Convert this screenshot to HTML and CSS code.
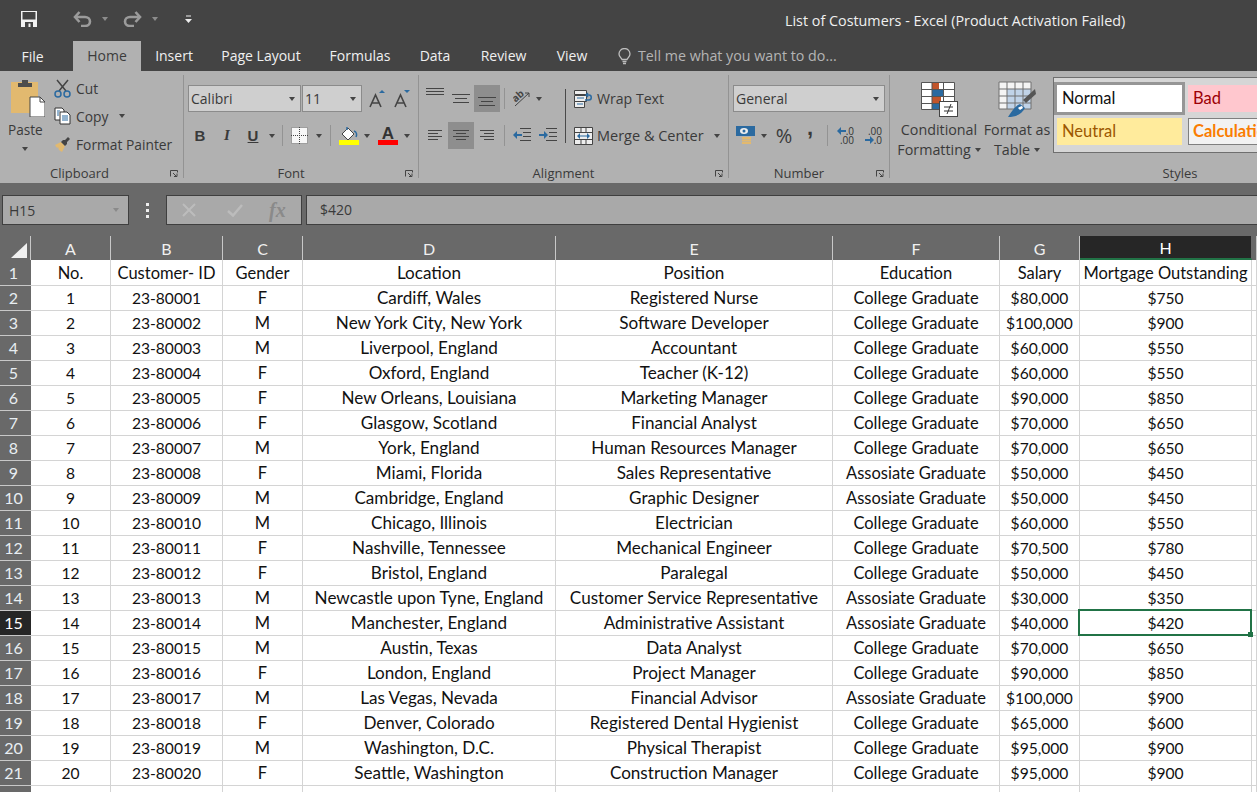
FILE: index.html
```html
<!DOCTYPE html>
<html lang="en">
<head>
<meta charset="utf-8">
<title>List of Costumers - Excel</title>
<link rel="stylesheet" href="styles.css">
</head>
<body>
<header class="titlebar">
  <div class="qat">
    <svg class="qa-save" width="16" height="16" viewBox="0 0 16 16"><path d="M0 0h16v16H0z" fill="#f2f2f2"/><path d="M1.500 1h13v7.500h-13z" fill="#444"/><path d="M4 11h8v5H4z" fill="#444"/><path d="M7.500 12.500h2V16h-2z" fill="#f2f2f2"/></svg>
    <svg class="qa-undo" width="19" height="16" viewBox="0 0 19 16"><path d="M2 6h10a5 4.500 0 0 1 0 9H8" fill="none" stroke="#9b9b9b" stroke-width="2.600"/><path d="M6.500 1 2 6l4.500 5" fill="none" stroke="#9b9b9b" stroke-width="2.600"/></svg>
    <i class="caret dim qa-c1"></i>
    <svg class="qa-redo" width="19" height="16" viewBox="0 0 19 16"><path d="M17 6H7a5 4.500 0 0 0 0 9h4" fill="none" stroke="#9b9b9b" stroke-width="2.600"/><path d="M12.500 1 17 6l-4.500 5" fill="none" stroke="#9b9b9b" stroke-width="2.600"/></svg>
    <i class="caret dim qa-c2"></i>
    <svg class="qa-more" width="7" height="8" viewBox="0 0 7 8"><path d="M1 1h5" stroke="#eee"/><path d="M0 4h7L3.500 8z" fill="#eee"/></svg>
  </div>
  <div class="doc-title">List of Costumers - Excel (Product Activation Failed)</div>
</header>
<nav class="tabs">
  <span class="tab tab-file">File</span>
  <span class="tab tab-home">Home</span>
  <span class="tab tab-insert">Insert</span>
  <span class="tab tab-layout">Page Layout</span>
  <span class="tab tab-formulas">Formulas</span>
  <span class="tab tab-data">Data</span>
  <span class="tab tab-review">Review</span>
  <span class="tab tab-view">View</span>
  <svg class="bulb" width="13" height="17" viewBox="0 0 13 17"><path d="M4 11.500C3 9.500 1 8.500 1 6a5.500 5.500 0 0 1 11 0c0 2.500-2 3.500-3 5.500z" fill="none" stroke="#bdbdbd" stroke-width="1.300"/><path d="M4.500 13.500h4M5 15.500h3" stroke="#bdbdbd" stroke-width="1.300"/></svg>
  <span class="tell">Tell me what you want to do...</span>
</nav>

<section class="ribbon">
  <div class="group g-clip">
    <div class="clip-body">
      <div class="paste">
        <svg width="37" height="38" viewBox="0 0 37 38"><rect x="3" y="3" width="27" height="31" fill="#e2b96f"/><path d="M10 4h4V1h6v3h4v4H10z" fill="#4d4d4d"/><path d="M22 18h10l5 5v15H22z" fill="#fff" stroke="#444"/><path d="M32 18v5h5" fill="none" stroke="#444"/></svg>
        <span class="paste-label">Paste</span>
        <i class="caret"></i>
      </div>
      <ul class="clip-list">
        <li><svg width="17" height="19" viewBox="0 0 17 19"><path d="M3 1l9 11M14 1L5 12" stroke="#444" stroke-width="1.500"/><circle cx="4" cy="15" r="3" fill="none" stroke="#2b6aa0" stroke-width="1.500"/><circle cx="13" cy="15" r="3" fill="none" stroke="#2b6aa0" stroke-width="1.500"/></svg><span>Cut</span></li>
        <li><svg width="17" height="18" viewBox="0 0 17 18"><path d="M1 1h7l2 2v10H1z" fill="#fff" stroke="#333"/><path d="M6 5h7l3 3v9H6z" fill="#fff" stroke="#333"/><path d="M8 9h6M8 11h6M8 13h6M3 4h3M3 6h2M3 8h2" stroke="#2b6aa0"/></svg><span>Copy</span><i class="caret copy-caret"></i></li>
        <li><svg width="17" height="16" viewBox="0 0 17 16"><path d="M1 9l6-3 4 4-3 6-3-2-1-3-1 1z" fill="#e2b96f"/><path d="M7 6l2-2 2 0 3-3 2 2-3 3 0 2-2 2z" fill="#444"/></svg><span>Format Painter</span></li>
      </ul>
    </div>
    <div class="glabel lb-clip">Clipboard<svg class="launch" width="8" height="7" viewBox="0 0 8 7"><path d="M.5 6.500v-6h7v2M3 3l3 3M4 6.500h3v-3" fill="none" stroke="#444"/></svg></div>
  </div>

  <div class="group g-font">
    <div class="row">
      <div class="combo c-font"><span>Calibri</span><i class="caret"></i></div>
      <div class="combo c-size"><span>11</span><i class="caret"></i></div>
      <svg class="grow" width="16" height="18" viewBox="0 0 16 18"><path d="M1 17 6.500 5 12 17M3.500 13h6" fill="none" stroke="#444" stroke-width="1.600"/><path d="M10 3h6l-3-3z" fill="#2b6aa0"/></svg>
      <svg class="shrink" width="16" height="18" viewBox="0 0 16 18"><path d="M1 17 6.500 5 12 17M3.500 13h6" fill="none" stroke="#444" stroke-width="1.600"/><path d="M10 0h6l-3 3z" fill="#2b6aa0"/></svg>
    </div>
    <div class="row row2">
      <b class="fmt f-b">B</b>
      <em class="fmt f-i">I</em>
      <u class="fmt f-u">U</u>
      <i class="caret f-c1"></i>
      <i class="vline v-f1"></i>
      <svg class="f-border" width="17" height="17" viewBox="0 0 17 17"><rect width="17" height="17" fill="#f7f7f7"/><path d="M.5.500h16v16H.5zM8.500 0v17M0 8.500h17" fill="none" stroke="#444" stroke-dasharray="1 1"/></svg>
      <i class="caret f-c2"></i>
      <i class="vline v-f2"></i>
      <svg class="f-fill" width="20" height="19" viewBox="0 0 20 19"><path d="M3 8l6-6 6 6-6 6z" fill="#fff" stroke="#444"/><path d="M8 1v3M15 5c3 1 3 4 2 6" fill="none" stroke="#2b6aa0" stroke-width="1.500"/><rect y="14" width="20" height="5" fill="#ff0"/></svg>
      <i class="caret f-c3"></i>
      <span class="f-color">A</span>
      <i class="caret f-c4"></i>
    </div>
    <div class="glabel lb-font">Font<svg class="launch" width="8" height="7" viewBox="0 0 8 7"><path d="M.5 6.500v-6h7v2M3 3l3 3M4 6.500h3v-3" fill="none" stroke="#444"/></svg></div>
  </div>

  <div class="group g-align">
    <div class="align-body">
      <div class="align-grid">
        <div class="row">
          <svg class="al a1" width="18" height="8" viewBox="0 0 18 8"><path d="M0 .5h18M0 3.500h18M0 6.500h18" stroke="#444"/></svg>
          <svg class="al a2" width="18" height="11" viewBox="0 0 18 11"><path d="M0 1.500h18M3 5.500h12M1 9.500h16" stroke="#444"/></svg>
          <span class="sel-btn"><svg width="18" height="11" viewBox="0 0 18 11"><path d="M0 1.500h18M3 5.500h12M1 9.500h16" stroke="#444"/></svg></span>
          <i class="vline v-a1"></i>
          <svg class="orient" width="18" height="17" viewBox="0 0 18 17"><path d="M2 16 16 3M12 3h4v4" fill="none" stroke="#444"/><text x="0" y="10" class="orient-t" transform="rotate(-42 5 8)">ab</text></svg>
          <i class="caret a-c"></i>
        </div>
        <div class="row row2">
          <svg class="al a3" width="14" height="11" viewBox="0 0 14 11"><path d="M0 .5h14M0 3.500h10M0 6.500h14M0 9.500h10" stroke="#444"/></svg>
          <span class="sel-btn sel-mid"><svg width="16" height="11" viewBox="0 0 16 11"><path d="M0 .5h16M3 3.500h10M0 6.500h16M3 9.500h10" stroke="#444"/></svg></span>
          <svg class="al a4" width="14" height="11" viewBox="0 0 14 11"><path d="M0 .5h14M4 3.500h10M0 6.500h14M4 9.500h10" stroke="#444"/></svg>
          <i class="vline v-a2"></i>
          <svg class="ind1" width="18" height="15" viewBox="0 0 18 15"><path d="M7 .5h11M10 4.500h8M10 8.500h8M7 12.500h11" stroke="#444"/><path d="M0 7l4-4v3h5v2H4v3z" fill="#2b6aa0"/></svg>
          <svg class="ind2" width="18" height="15" viewBox="0 0 18 15"><path d="M7 .5h11M10 4.500h8M10 8.500h8M7 12.500h11" stroke="#444"/><path d="M9 7 5 3v3H0v2h5v3z" fill="#2b6aa0"/></svg>
        </div>
      </div>
      <i class="tall-line"></i>
      <div class="wrap-col">
        <div class="wrap-item"><svg width="19" height="18" viewBox="0 0 19 18"><path d="M.5.5h12v4H.5zM.5 5.500h12v6H.5zM.5 11.500h10v6H.5z" fill="#eee" stroke="#444"/><path d="M3 8h7M3 14h6" stroke="#2b6aa0"/><path d="M11 10h4c3 0 3-5 0-5h-3M14 3l-2 2 2 2" fill="none" stroke="#2b6aa0" stroke-width="1.500"/></svg><span>Wrap Text</span></div>
        <div class="wrap-item merge"><svg width="19" height="18" viewBox="0 0 19 18"><path d="M.5.5h18v17H.5zM0 5.500h19M0 12.500h19M7 .5v5M12 .5v5M7 12.500v5M12 12.500v5" fill="#eee" stroke="#444"/><path d="M4 9h11" stroke="#2b6aa0"/><path d="M3 9l3-3v6zM16 9l-3-3v6z" fill="#2b6aa0"/></svg><span>Merge &amp; Center</span><i class="caret merge-c"></i></div>
      </div>
    </div>
    <div class="glabel lb-align">Alignment<svg class="launch" width="8" height="7" viewBox="0 0 8 7"><path d="M.5 6.500v-6h7v2M3 3l3 3M4 6.500h3v-3" fill="none" stroke="#444"/></svg></div>
  </div>

  <div class="group g-num">
    <div class="row"><div class="combo c-gen"><span>General</span><i class="caret"></i></div></div>
    <div class="row row2">
      <svg class="n-acc" width="19" height="19" viewBox="0 0 19 19"><rect x="0" y="0" width="19" height="10" fill="#2b6aa0"/><ellipse cx="8" cy="5" rx="4" ry="3" fill="#eee"/><circle cx="8" cy="5" r="1.500" fill="#2b6aa0"/><path d="M6 12h9M6 14.500h9M6 17h9" stroke="#e2b96f" stroke-width="2"/></svg>
      <i class="caret n-c"></i>
      <span class="n-pct">%</span>
      <span class="n-comma">,</span>
      <i class="vline v-n"></i>
      <span class="n-dec d1"><span class="dec-line"><svg width="9" height="8" viewBox="0 0 9 8"><path d="M0 4l4-4v3h5v2H4v3z" fill="#2b6aa0"/></svg>.0</span><span class="dec-line">.00</span></span>
      <span class="n-dec d2"><span class="dec-line">.00</span><span class="dec-line"><svg width="9" height="8" viewBox="0 0 9 8"><path d="M9 4 5 0v3H0v2h5v3z" fill="#2b6aa0"/></svg>.0</span></span>
    </div>
    <div class="glabel lb-num">Number<svg class="launch" width="8" height="7" viewBox="0 0 8 7"><path d="M.5 6.500v-6h7v2M3 3l3 3M4 6.500h3v-3" fill="none" stroke="#444"/></svg></div>
  </div>

  <div class="group g-styles">
    <div class="styles-body">
      <div class="big big-cond">
        <svg width="37" height="36" viewBox="0 0 37 36"><path d="M.5.500h33v27H.5z" fill="#fff"/><path d="M11 1h7v7h-7zM11 15h9v7h-9z" fill="#c2552b"/><path d="M11 8h11v7H11zM11 22h7v6h-7z" fill="#2b6aa0"/><path d="M.5.500h33v27H.5zM1 7.500h33M1 14.500h33M1 21.500h33M11 1v27M22.500 1v27" fill="none" stroke="#555" stroke-width="1"/><rect x="18.500" y="19.500" width="18" height="15" fill="#fff" stroke="#444"/><path d="M23 25h9M23 29h9M30 22l-4 10" stroke="#333"/></svg>
        <span class="big-label">Conditional</span>
        <span class="big-label">Formatting<i class="caret big-c"></i></span>
      </div>
      <div class="big big-table">
        <svg width="38" height="37" viewBox="0 0 38 37"><path d="M1 1h32v27H1z" fill="#f4f4f4"/><path d="M9 8h24v20H9z" fill="#c0d3e8"/><path d="M1 1h32v27H1zM1 8h32M1 15h32M1 22h32M9 1v27M17 1v27M25 1v27" fill="none" stroke="#707070"/><path d="M10 36c8 0 14-3 17-9l-5-4c-5 2-8 7-12 13z" fill="#2b6aa0"/><path d="M20 27c1-1 3-2 4-2l1 2-3 2z" fill="#fff"/><path d="M25 19l3 3 10-9-1-5z" fill="#555"/></svg>
        <span class="big-label">Format as</span>
        <span class="big-label">Table<i class="caret big-c"></i></span>
      </div>
      <div class="gallery">
        <div class="cell-style st-normal">Normal</div>
        <div class="cell-style st-bad">Bad</div>
        <div class="cell-style st-neutral">Neutral</div>
        <div class="cell-style st-calc">Calculation</div>
      </div>
    </div>
    <div class="glabel lb-styles">Styles</div>
  </div>
</section>

<section class="fbar">
  <div class="namebox"><span>H15</span><i class="caret dim2"></i></div>
  <div class="dots"><i></i><i></i><i></i></div>
  <div class="fx-btns">
    <svg class="fx-x" width="14" height="14" viewBox="0 0 14 14"><path d="M1 1l12 12M13 1 1 13" stroke="#bcbcbc" stroke-width="2"/></svg>
    <svg class="fx-v" width="16" height="13" viewBox="0 0 16 13"><path d="M1 7l5 4.500L15 1" fill="none" stroke="#bcbcbc" stroke-width="2.500"/></svg>
    <span class="fx-f">fx</span>
  </div>
  <div class="finput">$420</div>
</section>

<main class="sheet">
<table class="grid">
<colgroup><col class="c0"><col class="ca"><col class="cb"><col class="cc"><col class="cd"><col class="ce"><col class="cf"><col class="cg"><col class="ch"><col class="ci"></colgroup>
<thead><tr><th class="corner"><i></i></th><th>A</th><th>B</th><th>C</th><th>D</th><th>E</th><th>F</th><th>G</th><th class="active">H</th><th></th></tr></thead>
<tbody>
<tr><th>1</th><td>No.</td><td>Customer- ID</td><td>Gender</td><td>Location</td><td>Position</td><td>Education</td><td>Salary</td><td>Mortgage Outstanding</td><td></td></tr>
<tr><th>2</th><td>1</td><td>23-80001</td><td>F</td><td>Cardiff, Wales</td><td>Registered Nurse</td><td>College Graduate</td><td>$80,000</td><td>$750</td><td></td></tr>
<tr><th>3</th><td>2</td><td>23-80002</td><td>M</td><td>New York City, New York</td><td>Software Developer</td><td>College Graduate</td><td>$100,000</td><td>$900</td><td></td></tr>
<tr><th>4</th><td>3</td><td>23-80003</td><td>M</td><td>Liverpool, England</td><td>Accountant</td><td>College Graduate</td><td>$60,000</td><td>$550</td><td></td></tr>
<tr><th>5</th><td>4</td><td>23-80004</td><td>F</td><td>Oxford, England</td><td>Teacher (K-12)</td><td>College Graduate</td><td>$60,000</td><td>$550</td><td></td></tr>
<tr><th>6</th><td>5</td><td>23-80005</td><td>F</td><td>New Orleans, Louisiana</td><td>Marketing Manager</td><td>College Graduate</td><td>$90,000</td><td>$850</td><td></td></tr>
<tr><th>7</th><td>6</td><td>23-80006</td><td>F</td><td>Glasgow, Scotland</td><td>Financial Analyst</td><td>College Graduate</td><td>$70,000</td><td>$650</td><td></td></tr>
<tr><th>8</th><td>7</td><td>23-80007</td><td>M</td><td>York, England</td><td>Human Resources Manager</td><td>College Graduate</td><td>$70,000</td><td>$650</td><td></td></tr>
<tr><th>9</th><td>8</td><td>23-80008</td><td>F</td><td>Miami, Florida</td><td>Sales Representative</td><td>Assosiate Graduate</td><td>$50,000</td><td>$450</td><td></td></tr>
<tr><th>10</th><td>9</td><td>23-80009</td><td>M</td><td>Cambridge, England</td><td>Graphic Designer</td><td>Assosiate Graduate</td><td>$50,000</td><td>$450</td><td></td></tr>
<tr><th>11</th><td>10</td><td>23-80010</td><td>M</td><td>Chicago, Illinois</td><td>Electrician</td><td>College Graduate</td><td>$60,000</td><td>$550</td><td></td></tr>
<tr><th>12</th><td>11</td><td>23-80011</td><td>F</td><td>Nashville, Tennessee</td><td>Mechanical Engineer</td><td>College Graduate</td><td>$70,500</td><td>$780</td><td></td></tr>
<tr><th>13</th><td>12</td><td>23-80012</td><td>F</td><td>Bristol, England</td><td>Paralegal</td><td>College Graduate</td><td>$50,000</td><td>$450</td><td></td></tr>
<tr><th>14</th><td>13</td><td>23-80013</td><td>M</td><td>Newcastle upon Tyne, England</td><td>Customer Service Representative</td><td>Assosiate Graduate</td><td>$30,000</td><td>$350</td><td></td></tr>
<tr><th class="active">15</th><td>14</td><td>23-80014</td><td>M</td><td>Manchester, England</td><td>Administrative Assistant</td><td>Assosiate Graduate</td><td>$40,000</td><td class="selected">$420<span class="sel-box"><i></i></span></td><td></td></tr>
<tr><th>16</th><td>15</td><td>23-80015</td><td>M</td><td>Austin, Texas</td><td>Data Analyst</td><td>College Graduate</td><td>$70,000</td><td>$650</td><td></td></tr>
<tr><th>17</th><td>16</td><td>23-80016</td><td>F</td><td>London, England</td><td>Project Manager</td><td>College Graduate</td><td>$90,000</td><td>$850</td><td></td></tr>
<tr><th>18</th><td>17</td><td>23-80017</td><td>M</td><td>Las Vegas, Nevada</td><td>Financial Advisor</td><td>Assosiate Graduate</td><td>$100,000</td><td>$900</td><td></td></tr>
<tr><th>19</th><td>18</td><td>23-80018</td><td>F</td><td>Denver, Colorado</td><td>Registered Dental Hygienist</td><td>College Graduate</td><td>$65,000</td><td>$600</td><td></td></tr>
<tr><th>20</th><td>19</td><td>23-80019</td><td>M</td><td>Washington, D.C.</td><td>Physical Therapist</td><td>College Graduate</td><td>$95,000</td><td>$900</td><td></td></tr>
<tr><th>21</th><td>20</td><td>23-80020</td><td>F</td><td>Seattle, Washington</td><td>Construction Manager</td><td>College Graduate</td><td>$95,000</td><td>$900</td><td></td></tr>
<tr><th></th><td></td><td></td><td></td><td></td><td></td><td></td><td></td><td></td><td></td></tr>
</tbody>
</table>
</main>
</body>
</html>
```
FILE: styles.css
```css
* { box-sizing: border-box; }
html, body { margin: 0; padding: 0; }
body {
  width: 1257px; height: 792px; overflow: hidden; background: #fff;
  font-family: "Open Sans", "Liberation Sans", sans-serif; color: #333;
}
i { display: block; font-style: normal; }
svg { display: block; flex: none; }

/* title bar */
.titlebar { height: 41px; background: #444; display: flex; align-items: center; }
.qat { width: 785px; height: 41px; display: flex; align-items: center; padding-left: 21px; flex: none; }
.qa-save { margin-top: -3px; }
.qa-undo { margin-left: 36px; margin-top: -3px; }
.qa-c1 { margin-left: 10px; margin-top: -3px; }
.qa-redo { margin-left: 15px; margin-top: -3px; }
.qa-c2 { margin-left: 10px; margin-top: -3px; }
.qa-more { margin-left: 27px; margin-top: -3px; }
.doc-title { font-size: 14.350px; color: #f0f0f0; margin-top: -1px; white-space: nowrap; }

/* tabs */
.tabs { height: 30px; background: #444; display: flex; align-items: stretch; position: relative; font-size: 14px; }
.tab { display: flex; align-items: center; justify-content: center; color: #f0f0f0; flex: none; white-space: nowrap; padding-bottom: 2px; }
.tab-file { margin-left: 21px; width: 23px; padding-top: 3px; }
.tab-home { margin-left: 29px; width: 68px; background: #b1b1b1; color: #3c3c3c; }
.tab-insert { margin-left: 15px; width: 36px; }
.tab-layout { margin-left: 29px; width: 80px; }
.tab-formulas { margin-left: 29px; width: 60px; }
.tab-data { margin-left: 29px; width: 32px; }
.tab-review { margin-left: 29px; width: 47px; }
.tab-view { margin-left: 29px; width: 32px; }
.bulb { margin-left: 30px; align-self: center; }
.tell { margin-left: 7px; color: #b4b4b4; align-self: center; padding-bottom: 2px; white-space: nowrap; font-size: 14.250px; }

/* ribbon */
.ribbon { height: 112px; background: #b1b1b1; display: flex; padding-top: 4px; font-size: 14px; color: #3a3a3a; overflow: hidden; }
.group { height: 103px; border-right: 1px solid #939393; flex: none; display: flex; flex-direction: column; position: relative; }
.g-clip { width: 184px; }
.g-font { width: 235px; padding: 10px 0 0 4px; }
.g-align { width: 310px; }
.g-num { width: 161px; padding: 10px 0 0 4px; }
.g-styles { width: 368px; border-right: 0; }
.glabel { position: absolute; left: 0; right: 0; bottom: -2px; height: 14px; line-height: 14px; font-size: 13px; text-align: center; color: #3a3a3a; }
.launch { position: absolute; bottom: 3px; right: 5px; }
.lb-clip { padding-right: 24px; }
.lb-font { padding-right: 20px; }
.lb-align { padding-right: 20px; }
.lb-num { padding-right: 20px; }
.row { display: flex; align-items: center; height: 27px; }
.row2 { margin-top: 10px; }

.caret { width: 0; height: 0; flex: none; border-left: 3.5px solid transparent; border-right: 3.5px solid transparent; border-top: 4px solid #444; }
.caret.dim { border-top-color: #8c8c8c; }
.caret.dim2 { border-top-color: #8a8a8a; }
.vline { width: 1px; height: 21px; background: #939393; flex: none; }

/* clipboard */
.clip-body { display: flex; padding-left: 8px; }
.paste { width: 37px; display: flex; flex-direction: column; align-items: flex-start; padding-top: 4px; }
.paste-label { font-size: 13.600px; line-height: 18px; margin-top: 4px; }
.paste .caret { margin: 8px 0 0 14px; }
.clip-list { list-style: none; margin: -1px 0 0; padding: 0 0 0 9px; }
.clip-list li { display: flex; align-items: center; height: 28px; white-space: nowrap; font-size: 13.800px; }
.clip-list svg { margin-right: 5px; }
.copy-caret { margin-left: 11px; }

/* font */
.combo { height: 27px; background: #cfcfcf; border: 1px solid #8b8b8b; display: flex; align-items: center; justify-content: space-between; padding: 0 5px 0 2px; font-size: 14px; color: #3a3a3a; flex: none; }
.c-font { width: 113px; }
.c-size { width: 60px; margin-left: 1px; }
.grow { margin-left: 7px; }
.shrink { margin-left: 9px; }
.fmt { width: 20px; text-align: center; font-size: 15px; color: #3a3a3a; flex: none; font-family: "Liberation Sans", sans-serif; }
.f-b { margin-left: 2px; font-weight: 700; }
.f-i { margin-left: 7px; font-weight: 700; font-family: "Liberation Serif", serif; }
.f-u { margin-left: 6px; font-weight: 700; }
.f-c1 { margin-left: 6px; }
.v-f1 { margin-left: 7px; }
.f-border { margin-left: 8px; }
.f-c2 { margin-left: 8px; }
.v-f2 { margin-left: 8px; }
.f-fill { margin-left: 8px; }
.f-c3 { margin-left: 5px; }
.f-color { width: 20px; margin-left: 8px; flex: none; text-align: center; font-family: "Liberation Sans", sans-serif; font-weight: 700; font-size: 17px; line-height: 16px; height: 19px; border-bottom: 5px solid #f00; color: #333; }
.f-c4 { margin-left: 6px; }

/* alignment */
.align-body { display: flex; padding: 10px 0 0 7px; }
.align-grid { width: 139px; flex: none; }
.a1 { margin-top: -13px; }
.a2 { margin-left: 8px; }
.sel-btn { width: 26px; height: 27px; background: #8e8e8e; display: flex; align-items: center; justify-content: center; flex: none; }
.row .sel-btn { margin-left: 4px; }
.row .sel-btn svg { margin-top: 5px; }
.row .sel-mid svg { margin-top: 0; }
.row .sel-mid { margin-left: 6px; }
.v-a1 { margin-left: 4px; }
.orient { margin-left: 8px; }
.orient-t { font-family: "Open Sans", sans-serif; font-size: 10px; font-weight: 700; fill: #444; }
.a-c { margin-left: 5px; }
.a3 { margin-left: 2px; }
.a4 { margin-left: 6px; }
.v-a2 { margin-left: 10px; }
.ind1 { margin-left: 8px; }
.ind2 { margin-left: 8px; }
.tall-line { width: 1px; height: 54px; background: #4a4a4a; margin: 4px 0 0 0; flex: none; }
.wrap-col { padding-left: 8px; }
.wrap-item { display: flex; align-items: center; height: 27px; white-space: nowrap; font-size: 14.100px; }
.wrap-item + .wrap-item { margin-top: 10px; }
.wrap-item svg { margin-right: 4px; }
.merge { font-size: 14.500px; }
.merge-c { margin-left: 10px; }

/* number */
.c-gen { width: 152px; }
.n-acc { margin-left: 3px; }
.n-c { margin-left: 6px; }
.n-pct { margin-left: 8px; width: 18px; text-align: center; font-size: 20px; line-height: 20px; color: #3a3a3a; flex: none; display: flex; justify-content: center; }
.n-comma { margin-left: 12px; width: 10px; font-family: "Liberation Sans", sans-serif; font-weight: 700; font-size: 22px; line-height: 22px; text-align: center; flex: none; margin-top: -15px; }
.v-n { margin-left: 12px; }
.n-dec { display: flex; flex-direction: column; font-size: 10px; line-height: 9px; width: 19px; align-items: flex-end; flex: none; color: #333; }
.dec-line { display: flex; align-items: center; height: 9px; white-space: nowrap; }
.d1 { margin-left: 7px; }
.d2 { margin-left: 9px; }

/* styles */
.styles-body { display: flex; position: relative; }
.big { display: flex; flex-direction: column; align-items: center; flex: none; font-size: 14.300px; padding-top: 7px; }
.big-cond { margin-left: 3px; width: 92px; }
.big-table { margin-left: -2px; width: 68px; padding-top: 6px; }
.big-label { height: 20px; line-height: 20px; white-space: nowrap; display: flex; align-items: center; }
.big svg + .big-label { margin-top: 2px; }
.big-c { margin-left: 4px; }
.gallery { position: absolute; left: 163px; top: 2px; width: 210px; height: 76px; background: #d6d6d6; border: 1px solid #6f6f6f; display: grid; grid-template-columns: 125px 80px; grid-template-rows: 27px 27px; column-gap: 6px; row-gap: 6px; padding: 7px 0 0 3px; overflow: hidden; }
.cell-style { font-size: 16.500px; line-height: 27px; padding-left: 5px; white-space: nowrap; overflow: hidden; font-family: Lato, "Liberation Sans", sans-serif; }
.st-normal { background: #fff; color: #111; outline: 3px solid #969696; }
.st-bad { background: #ffc7ce; color: #9c0006; }
.st-neutral { background: #ffeb9c; color: #9c5700; }
.st-calc { background: #f2f2f2; color: #fa7d00; font-weight: 700; border: 1px solid #7f7f7f; line-height: 25px; padding-left: 4px; }
.lb-styles { left: 162px; right: auto; width: 256px; }

/* formula bar */
.fbar { height: 53px; background: #696969; padding-top: 12px; display: flex; align-items: flex-start; }
.namebox { margin-left: 2px; width: 127px; height: 30px; background: #a9a9a9; border: 1px solid #3f3f3f; display: flex; align-items: center; justify-content: space-between; padding: 0 9px 0 6px; font-size: 14px; color: #3a3a3a; flex: none; }
.dots { width: 4px; margin-left: 17px; height: 30px; display: flex; flex-direction: column; justify-content: center; gap: 3px; flex: none; }
.dots i { width: 3px; height: 3px; background: #eee; }
.fx-btns { margin-left: 16px; width: 136px; height: 30px; background: #a9a9a9; border: 1px solid #3f3f3f; display: flex; align-items: center; flex: none; }
.fx-x { margin-left: 15px; }
.fx-v { margin-left: 31px; }
.fx-f { margin-left: 26px; font-family: "Liberation Serif", serif; font-style: italic; font-weight: 700; font-size: 20px; line-height: 20px; color: #8a8a8a; }
.finput { margin-left: 4px; flex: 1; height: 30px; background: #a9a9a9; border: 1px solid #3f3f3f; border-right: 0; line-height: 28px; padding-left: 13px; font-size: 14px; color: #3a3a3a; }

/* sheet */
.sheet { height: 556px; overflow: hidden; }
.grid { border-collapse: separate; border-spacing: 0; table-layout: fixed; width: 1257px; font-family: Lato, "Liberation Sans", sans-serif; font-size: 16.500px; color: #111; }
.c0 { width: 31px; } .ca { width: 80px; } .cb { width: 112px; } .cc { width: 80px; } .cd { width: 253px; }
.ce { width: 277px; } .cf { width: 167px; } .cg { width: 80px; } .ch { width: 172px; } .ci { width: 5px; }
.grid td, .grid tbody th { height: 25px; padding: 0; border-right: 1px solid #d4d4d4; border-bottom: 1px solid #d4d4d4; text-align: center; white-space: nowrap; font-weight: 400; line-height: 24px; }
.grid td:nth-child(2), .grid td:nth-child(3), .grid td:nth-child(8), .grid td:nth-child(9) { font-size: 15.600px; }
.grid td:nth-child(5), .grid td:nth-child(6) { font-size: 17.100px; }
.grid tbody tr:first-child td:nth-child(2), .grid tbody tr:first-child td:nth-child(3),
.grid tbody tr:first-child td:nth-child(8), .grid tbody tr:first-child td:nth-child(9) { font-size: 16.500px; }
.grid tbody tr:first-child td, .grid tbody tr:first-child th { padding-top: 1px; }
.grid thead th { height: 24px; padding: 1px 0 0; background: #696969; color: #f0f0f0; font-weight: 400; border-right: 1px solid #c8c8c8; font-size: 16px; line-height: 23px; }
.grid tbody th { background: #696969; color: #e8eef2; border-right: 0; border-bottom: 1px solid #c8c8c8; padding-right: 4px; font-size: 16px; width: 31px; }
.grid thead th.active { background: #262626; color: #fff; border-bottom: 2px solid #217346; border-right: 1px solid #696969; line-height: 21px; }
.grid tbody th.active { background: #262626; color: #fff; }
.corner { position: relative; }
.corner i { position: absolute; left: 11px; top: 7px; width: 0; height: 0; border-left: 16px solid transparent; border-bottom: 15px solid #f0f0f0; }
.selected { position: relative; }
.sel-box { position: absolute; left: -2px; top: -2px; right: -1px; bottom: -1px; border: 2px solid #217346; pointer-events: none; }
.sel-box i { position: absolute; right: -3px; bottom: -3px; width: 5px; height: 5px; background: #217346; }
```
